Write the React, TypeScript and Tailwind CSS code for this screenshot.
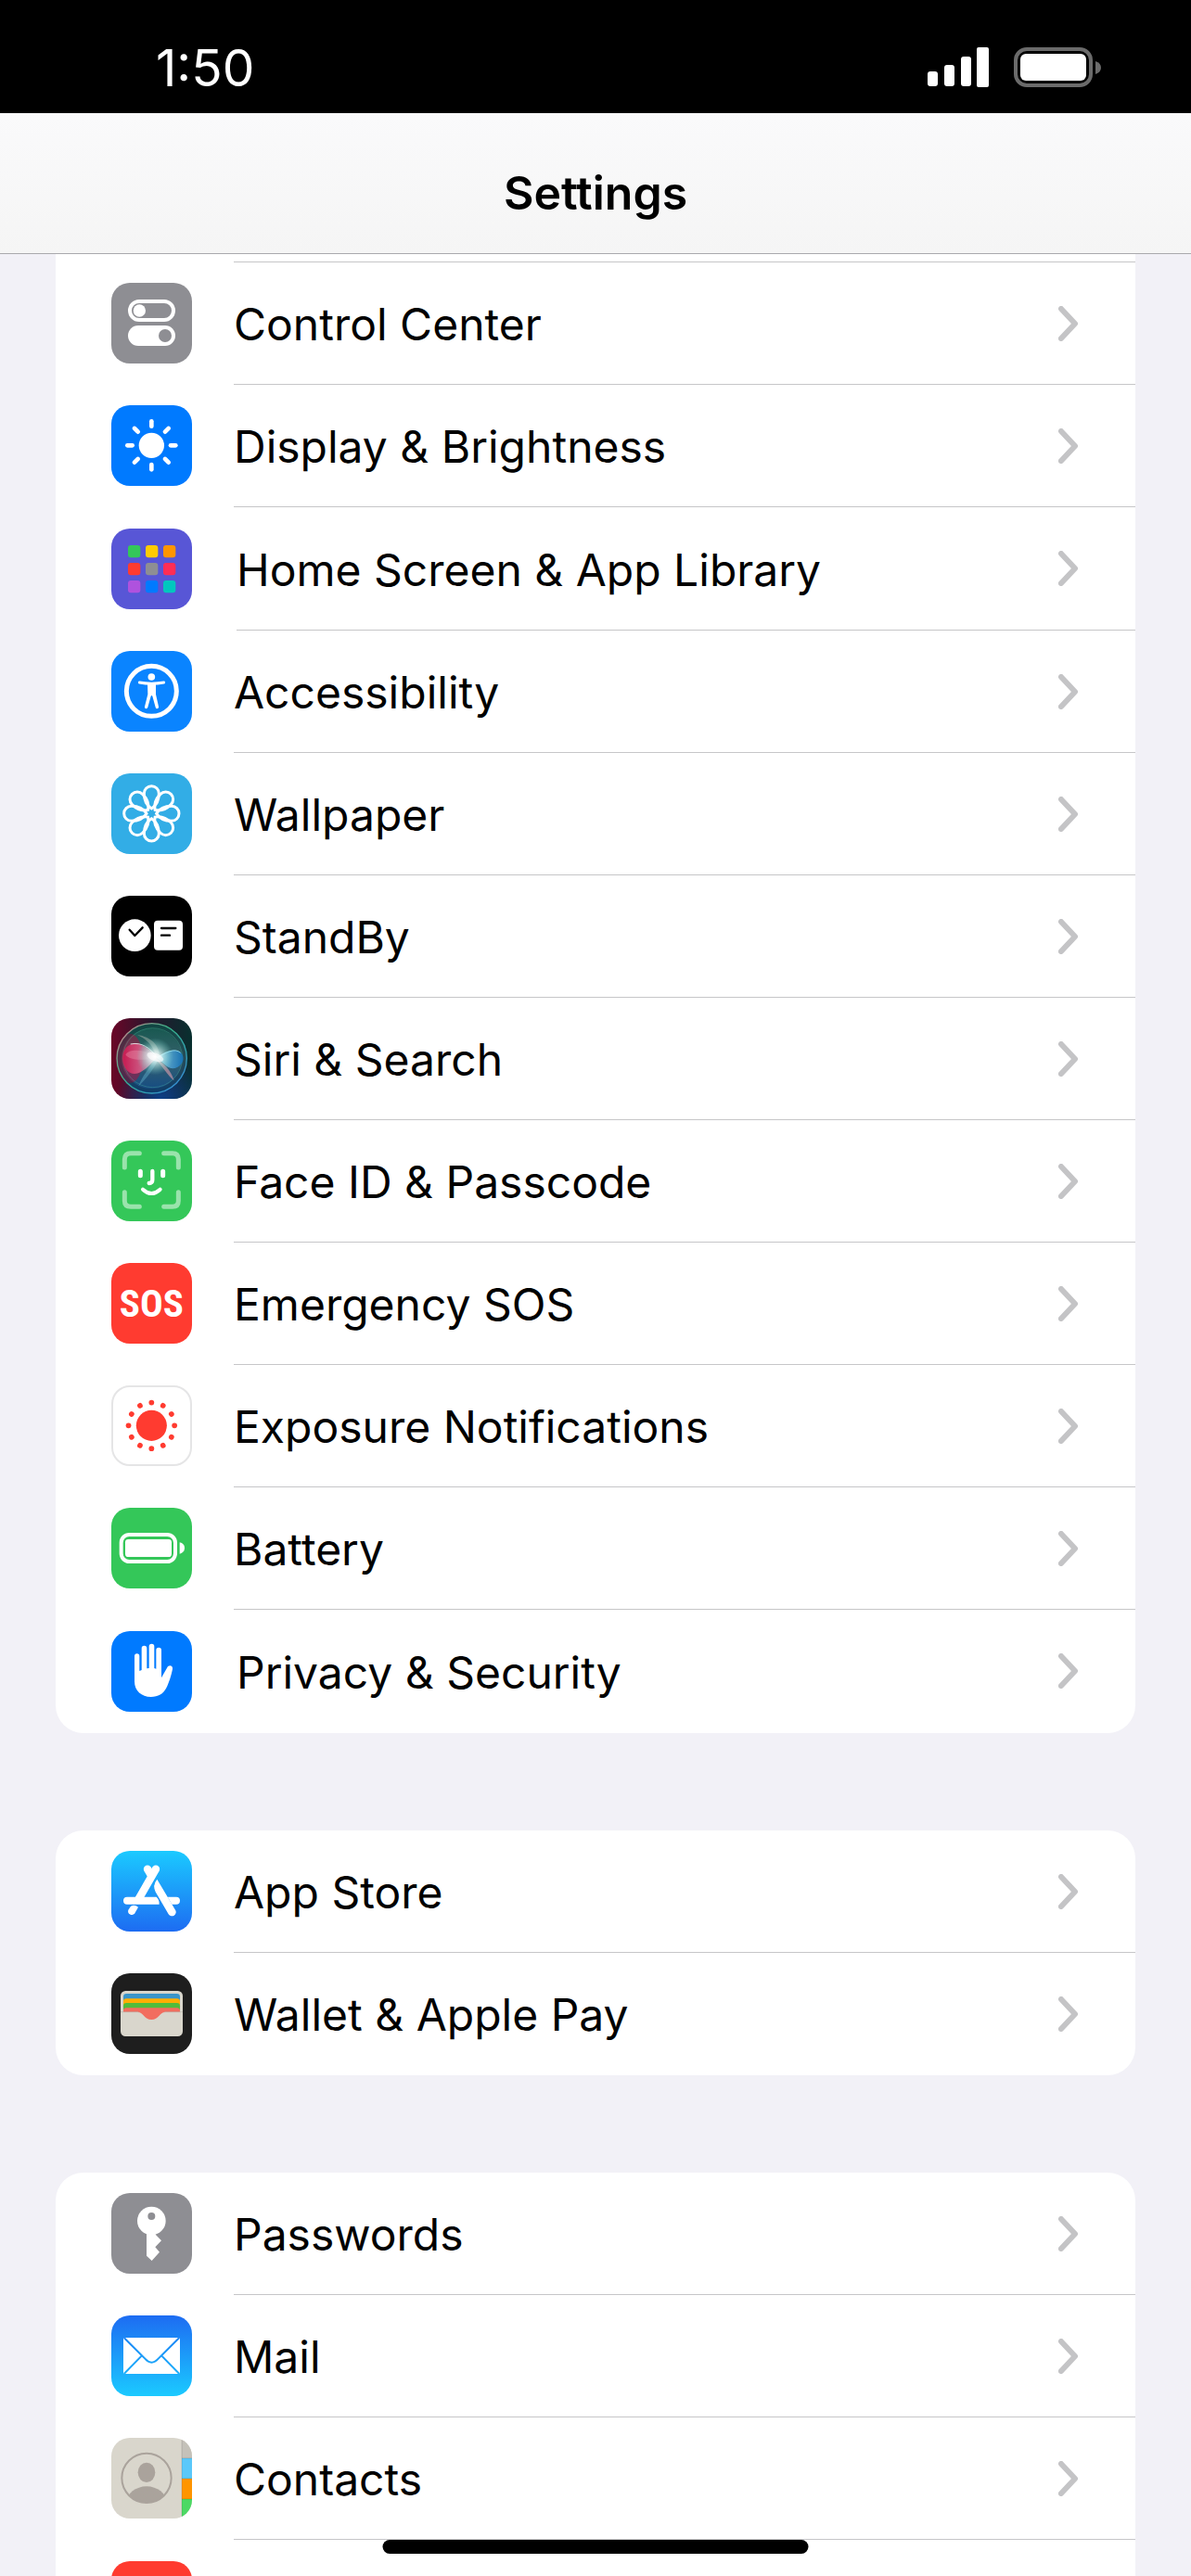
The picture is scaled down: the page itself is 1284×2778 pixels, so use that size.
import React from 'react';
import clsx from 'clsx';

type RowData = {
  label: string;
  icon: React.ReactNode;
  tall?: boolean;
};

function Tile({ className, children }: { className?: string; children?: React.ReactNode }) {
  return (
    <svg viewBox="0 0 261 261" fill="none" aria-hidden="true" className={clsx('size-[87px] shrink-0 rounded-[20px]', className)}>
      {children}
    </svg>
  );
}

function ControlCenterIcon() {
  return (
    <Tile className="bg-[#8e8e93]">
      <rect x="60" y="60" width="141" height="60" rx="30" stroke="#fff" strokeWidth="12" />
      <circle cx="91" cy="90" r="20" fill="#fff" />
      <rect x="54" y="138" width="153" height="66" rx="33" fill="#fff" />
      <circle cx="174" cy="171" r="21" fill="#8e8e93" />
    </Tile>
  );
}

function BrightnessIcon() {
  return (
    <Tile className="bg-[#007aff]">
      <circle cx="130" cy="130" r="41" fill="#fff" />
      {[0, 45, 90, 135, 180, 225, 270, 315].map((a) => (
        <path key={a} d="M130 52V68" stroke="#fff" strokeWidth="14" strokeLinecap="round" transform={`rotate(${a} 130 130)`} />
      ))}
    </Tile>
  );
}

const APP_COLORS = ['#34c759', '#ffcc00', '#ff9500', '#ff3b30', '#8e8e93', '#ff2d55', '#af52de', '#007aff', '#00c7be'];

function HomeScreenIcon() {
  return (
    <Tile className="bg-[#5856d6]">
      {APP_COLORS.map((color, i) => (
        <rect key={color} x={54 + (i % 3) * 57} y={54 + Math.floor(i / 3) * 57} width="40" height="40" rx="9" fill={color} />
      ))}
    </Tile>
  );
}

function AccessibilityIcon() {
  return (
    <Tile className="bg-[#0a84ff]">
      <circle cx="130" cy="130" r="81" stroke="#fff" strokeWidth="15" />
      <circle cx="130" cy="84" r="11.5" fill="#fff" />
      <path d="M91 102Q130 109 170 102" stroke="#fff" strokeWidth="9" strokeLinecap="round" />
      <path d="M117 104H144V140L153 180Q154 187 148 187Q144 187 143 182L133 146Q130 142 128 146L118 182Q116 187 112 187Q107 186 108 180L118 140Z" fill="#fff" />
    </Tile>
  );
}

function WallpaperIcon() {
  return (
    <Tile className="bg-[#32ade6]">
      {[0, 45, 90, 135, 180, 225, 270, 315].map((a) => (
        <path
          key={a}
          d="M130 114C114 104 106 84 106 65A24 24 0 0 1 154 65C154 84 146 104 130 114Z"
          stroke="#fff"
          strokeWidth="9"
          transform={`rotate(${a} 130 130)`}
        />
      ))}
    </Tile>
  );
}

function StandByIcon() {
  return (
    <Tile className="bg-black">
      <circle cx="76" cy="128" r="52" fill="#fff" />
      <path d="M59 110L76 129L101 103" stroke="#000" strokeWidth="7" strokeLinecap="round" strokeLinejoin="round" />
      <rect x="138" y="80" width="93" height="96" rx="12" fill="#fff" />
      <path d="M162 105H208M162 128H189" stroke="#000" strokeWidth="7" strokeLinecap="round" />
    </Tile>
  );
}

function SiriIcon() {
  return (
    <Tile>
      <defs>
        <linearGradient id="siri-bg" x1="0" y1="0" x2="1" y2="0">
          <stop offset="0" stopColor="#6b0627" />
          <stop offset="0.5" stopColor="#26172d" />
          <stop offset="1" stopColor="#08302f" />
        </linearGradient>
        <radialGradient id="siri-base" cx="0.62" cy="1" r="0.55">
          <stop offset="0" stopColor="#0c3f86" />
          <stop offset="1" stopColor="#0c3f86" stopOpacity="0" />
        </radialGradient>
        <linearGradient id="siri-ring" x1="0" y1="0" x2="1" y2="1">
          <stop offset="0" stopColor="#e37b8d" />
          <stop offset="0.4" stopColor="#3ab389" />
          <stop offset="0.7" stopColor="#2f9fb0" />
          <stop offset="1" stopColor="#3e82e8" />
        </linearGradient>
        <linearGradient id="siri-orb" x1="0" y1="0" x2="0" y2="1">
          <stop offset="0" stopColor="#14574c" />
          <stop offset="0.5" stopColor="#35616c" />
          <stop offset="1" stopColor="#124a86" />
        </linearGradient>
        <radialGradient id="siri-glow">
          <stop offset="0" stopColor="#fff" />
          <stop offset="0.3" stopColor="#e9fffb" stopOpacity="0.75" />
          <stop offset="1" stopColor="#6fd5c8" stopOpacity="0" />
        </radialGradient>
        <linearGradient id="siri-pink" x1="0" y1="0" x2="1" y2="0">
          <stop offset="0" stopColor="#e3104f" />
          <stop offset="1" stopColor="#efb0cb" />
        </linearGradient>
        <linearGradient id="siri-blue" x1="0" y1="0" x2="1" y2="0">
          <stop offset="0" stopColor="#9fe3f5" />
          <stop offset="1" stopColor="#0d76c9" />
        </linearGradient>
      </defs>
      <rect width="261" height="261" fill="url(#siri-bg)" />
      <rect width="261" height="261" fill="url(#siri-base)" />
      <circle cx="131" cy="130" r="113" fill="url(#siri-orb)" />
      <ellipse cx="60" cy="130" rx="42" ry="80" fill="#a8123f" opacity="0.55" />
      <circle cx="131" cy="130" r="113" stroke="url(#siri-ring)" strokeWidth="4" />
      <circle cx="131" cy="130" r="104" stroke="#061d2b" strokeOpacity="0.3" strokeWidth="12" />
      <circle cx="134" cy="128" r="96" stroke="#57c5a5" strokeOpacity="0.45" strokeWidth="2" />
      <path d="M147 128C120 92 82 72 54 90C28 108 32 160 60 176C92 192 122 152 147 128Z" fill="url(#siri-pink)" opacity="0.75" />
      <path d="M147 128C124 104 60 94 46 118C60 140 110 136 147 128Z" fill="#f0a0b8" opacity="0.35" />
      <path d="M84 54C128 60 158 88 156 128C132 110 140 80 84 54Z" fill="#c5c8bc" opacity="0.4" />
      <path d="M147 128C176 104 208 96 226 112C240 130 232 154 206 162C180 166 168 142 147 128Z" fill="url(#siri-blue)" opacity="0.75" />
      <path d="M140 128C166 142 194 168 203 202C184 188 160 148 140 128Z" fill="#df9fac" opacity="0.6" />
      <path d="M140 132C126 158 100 186 88 220C110 200 140 160 150 138Z" fill="#62b0ca" opacity="0.45" />
      <path d="M62 84C98 76 124 96 148 126" stroke="#fff" strokeOpacity="0.8" strokeWidth="3" />
      <path d="M147 128C176 112 204 94 224 112" stroke="#aef3ff" strokeOpacity="0.7" strokeWidth="3" />
      <circle cx="141" cy="124" r="60" fill="url(#siri-glow)" />
      <ellipse cx="142" cy="126" rx="28" ry="13" fill="#fff" opacity="0.6" transform="rotate(20 142 126)" />
    </Tile>
  );
}

function FaceIdIcon() {
  return (
    <Tile className="bg-[#34c759]">
      <path
        d="M43 87V61Q43 41 63 41H91M170 41H198Q217 41 217 61V87M217 167V195Q217 214 198 214H170M91 214H63Q43 214 43 195V167"
        stroke="#fff"
        strokeOpacity="0.5"
        strokeWidth="15"
        strokeLinecap="round"
      />
      <path d="M94 100V113M167 100V113" stroke="#fff" strokeWidth="15" strokeLinecap="round" />
      <path d="M133 99V127Q133 138 122 138" stroke="#fff" strokeWidth="13" strokeLinecap="round" />
      <path d="M102 158Q130 184 158 158" stroke="#fff" strokeWidth="12" strokeLinecap="round" />
    </Tile>
  );
}

function SosIcon() {
  return (
    <Tile className="bg-[#ff3b30]">
      <text x="130" y="175" fontSize="123" textAnchor="middle" fill="#fff" className="font-['Roboto_Condensed','Liberation_Sans_Narrow',sans-serif] font-bold">
        SOS
      </text>
    </Tile>
  );
}

function ExposureIcon() {
  return (
    <Tile className="border-2 border-[#e5e5e6] bg-white">
      <circle cx="130" cy="130" r="52" fill="#ff3b30" />
      {Array.from({ length: 12 }, (_, i) => (
        <circle key={i} cx="130" cy="52" r="9" fill="#ff3b30" transform={`rotate(${i * 30} 130 130)`} />
      ))}
    </Tile>
  );
}

function BatteryIcon() {
  return (
    <Tile className="bg-[#34c759]">
      <rect x="32" y="87" width="175" height="87" rx="26" stroke="#fff" strokeWidth="12" />
      <rect x="45" y="102" width="150" height="57" rx="10" fill="#fff" />
      <path d="M221 112Q237 116 237 130Q237 145 221 149Z" fill="#fff" />
    </Tile>
  );
}

function PrivacyIcon() {
  return (
    <Tile className="bg-[#007aff]">
      <path
        d="M75 81A8 8 0 0 1 91 81V129L98 126V56A8 8 0 0 1 115 56V121L122 120V50A8 8 0 0 1 139 50V120L145 122V62A8 8 0 0 1 162 62V151L180 119C186 107 200 111 198 123C194 143 186 168 178 184C168 204 152 213 128 213C98 213 75 194 75 163Z"
        fill="#fff"
      />
    </Tile>
  );
}

function AppStoreIcon() {
  return (
    <Tile>
      <defs>
        <linearGradient id="store-bg" x1="0" y1="0" x2="0" y2="1">
          <stop stopColor="#1bcaff" />
          <stop offset="1" stopColor="#1d6cf2" />
        </linearGradient>
      </defs>
      <rect width="261" height="261" fill="url(#store-bg)" />
      <path d="M144 59L86 160M117 59L131 83" stroke="#fff" strokeWidth="25" />
      <circle cx="144" cy="59" r="12.5" fill="#fff" />
      <circle cx="117" cy="59" r="12.5" fill="#fff" />
      <path d="M51 149H146Q156 158 155 173H51A12 12 0 0 1 51 149Z" fill="#fff" />
      <path d="M148 92L207 191A12 12 0 0 1 185 205L143 133Q132 111 148 92Z" fill="#fff" />
      <path d="M182 149H210A12 12 0 0 1 210 173H196Z" fill="#fff" />
      <path d="M63 179Q76 173 87 182L76 202A12 12 0 0 1 55 191Z" fill="#fff" />
    </Tile>
  );
}

function WalletIcon() {
  return (
    <Tile className="bg-[#1e1e1e]">
      <rect x="30" y="57" width="201" height="147" rx="16" fill="#d9d6cc" />
      <rect x="39" y="66" width="183" height="40" rx="10" fill="#3a95c9" />
      <rect x="39" y="82" width="183" height="36" rx="10" fill="#ffae03" />
      <rect x="39" y="96" width="183" height="30" rx="10" fill="#51bc3b" />
      <path d="M39 122Q39 112 49 112H212Q222 112 222 122V126H174C156 126 154 150 130 150C106 150 104 126 86 126H39Z" fill="#f26d5f" />
      <path d="M30 125H88M172 125H231" stroke="#b9b4ab" strokeWidth="2" />
    </Tile>
  );
}

function PasswordsIcon() {
  return (
    <Tile className="bg-[#8e8e93]">
      <circle cx="130" cy="90" r="46" fill="#fff" />
      <path d="M114 125H143V134L162 154L142 175L156 191L131 219L114 203Z" fill="#fff" />
      <circle cx="130" cy="75" r="12" fill="#8e8e93" />
    </Tile>
  );
}

function MailIcon() {
  return (
    <Tile>
      <defs>
        <linearGradient id="mail-bg" gradientUnits="userSpaceOnUse" x1="0" y1="0" x2="0" y2="261">
          <stop stopColor="#1d6cf2" />
          <stop offset="1" stopColor="#1bcaff" />
        </linearGradient>
      </defs>
      <rect width="261" height="261" fill="url(#mail-bg)" />
      <rect x="39" y="72" width="183" height="117" rx="3" fill="#fff" />
      <path d="M41 72L109 140Q130 164 152 140L220 72M41 189L98 131M220 189L163 131" stroke="url(#mail-bg)" strokeWidth="6" />
    </Tile>
  );
}

function ContactsIcon() {
  return (
    <Tile className="bg-[#d9d6cc]">
      <defs>
        <clipPath id="contact-clip">
          <circle cx="114" cy="130" r="81" />
        </clipPath>
      </defs>
      <circle cx="114" cy="130" r="80" stroke="#aaa39c" strokeWidth="6" />
      <ellipse cx="114" cy="112" rx="28" ry="32" fill="#aaa39c" />
      <ellipse cx="114" cy="208" rx="64" ry="51" fill="#aaa39c" clipPath="url(#contact-clip)" />
      <rect x="228" width="33" height="66" fill="#c4c1b9" />
      <rect x="228" y="66" width="33" height="66" fill="#5ac8fa" />
      <rect x="228" y="132" width="33" height="66" fill="#ff9500" />
      <rect x="228" y="198" width="33" height="63" fill="#4cd964" />
      <path d="M228 66H261M228 132H261M228 198H261M228 0V261" stroke="#000" strokeOpacity="0.2" strokeWidth="2" />
    </Tile>
  );
}

function Chevron() {
  return (
    <svg viewBox="0 0 22 38" fill="none" aria-hidden="true" className="h-[38px] w-[22px] shrink-0">
      <path d="M3 3L18 19L3 35" stroke="#c4c4c6" strokeWidth="6" strokeLinecap="round" strokeLinejoin="round" />
    </svg>
  );
}

function Row({ label, icon, tall, last }: RowData & { last?: boolean }) {
  return (
    <li>
      <a href="#" className={clsx('flex items-stretch pl-15', tall ? 'h-[133px]' : 'h-[132px]')}>
        <span className="flex items-center pb-px">{icon}</span>
        <span
          className={clsx(
            'flex flex-1 items-center justify-between border-b pr-[61px]',
            tall ? 'ml-12' : 'ml-[45px]',
            last ? 'border-transparent' : 'border-[#c6c6c8]',
          )}
        >
          <span className="pt-[3px]">{label}</span>
          <Chevron />
        </span>
      </a>
    </li>
  );
}

const general: RowData[] = [
  { label: 'Control Center', icon: <ControlCenterIcon /> },
  { label: 'Display & Brightness', icon: <BrightnessIcon /> },
  { label: 'Home Screen & App Library', icon: <HomeScreenIcon />, tall: true },
  { label: 'Accessibility', icon: <AccessibilityIcon /> },
  { label: 'Wallpaper', icon: <WallpaperIcon /> },
  { label: 'StandBy', icon: <StandByIcon /> },
  { label: 'Siri & Search', icon: <SiriIcon /> },
  { label: 'Face ID & Passcode', icon: <FaceIdIcon /> },
  { label: 'Emergency SOS', icon: <SosIcon /> },
  { label: 'Exposure Notifications', icon: <ExposureIcon /> },
  { label: 'Battery', icon: <BatteryIcon /> },
  { label: 'Privacy & Security', icon: <PrivacyIcon />, tall: true },
];

const store: RowData[] = [
  { label: 'App Store', icon: <AppStoreIcon /> },
  { label: 'Wallet & Apple Pay', icon: <WalletIcon /> },
];

const apps: RowData[] = [
  { label: 'Passwords', icon: <PasswordsIcon /> },
  { label: 'Mail', icon: <MailIcon /> },
  { label: 'Contacts', icon: <ContactsIcon /> },
];

function StatusBar() {
  return (
    <div className="flex h-[122px] shrink-0 items-center justify-between bg-black pt-6 pr-24 pl-[168px] text-white">
      <span className="text-[55px] leading-none">1:50</span>
      <svg viewBox="0 0 188 44" fill="none" aria-hidden="true" className="h-11 w-[188px]">
        <rect x="0" y="26" width="11" height="16" rx="3" fill="#fff" />
        <rect x="18" y="19" width="11" height="23" rx="3" fill="#fff" />
        <rect x="36" y="10" width="11" height="32" rx="3" fill="#fff" />
        <rect x="53" y="0" width="13" height="43" rx="2" fill="#fff" />
        <rect x="95" y="2" width="81" height="39" rx="12" stroke="#6b6b6b" strokeWidth="4" />
        <rect x="100" y="7" width="71" height="29" rx="6" fill="#fff" />
        <path d="M181 15Q187 17 187 22Q187 27 181 29Z" fill="#6b6b6b" />
      </svg>
    </div>
  );
}

export default function App() {
  return (
    <div className="flex h-screen w-full flex-col overflow-hidden bg-[#f2f1f7] font-['Inter','Liberation_Sans',sans-serif] text-[48px] leading-none text-black">
      <StatusBar />
      <header className="flex h-[152px] shrink-0 items-center justify-center border-b border-[#a9a9ad] bg-linear-to-b from-[#fafafb] to-[#f5f5f5] pt-5">
        <h1 className="text-[50px] font-semibold">Settings</h1>
      </header>
      <main className="flex-1 overflow-hidden px-15">
        <div className="bg-white pt-2 pl-48">
          <div className="border-b border-[#c6c6c8]" />
        </div>
        <ul className="overflow-hidden rounded-b-[30px] bg-white">
          {general.map((row, i) => (
            <Row key={row.label} {...row} last={i === general.length - 1} />
          ))}
        </ul>
        <ul className="mt-[105px] overflow-hidden rounded-[30px] bg-white">
          {store.map((row, i) => (
            <Row key={row.label} {...row} last={i === store.length - 1} />
          ))}
        </ul>
        <ul className="mt-[105px] overflow-hidden rounded-t-[30px] bg-white">
          {apps.map((row) => (
            <Row key={row.label} {...row} />
          ))}
          <li className="flex h-[132px] items-center pl-15">
            <Tile className="bg-[#ff3b30]" />
          </li>
        </ul>
      </main>
      <div className="fixed bottom-6 left-1/2 h-[15px] w-[459px] -translate-x-1/2 rounded-full bg-black" />
    </div>
  );
}
